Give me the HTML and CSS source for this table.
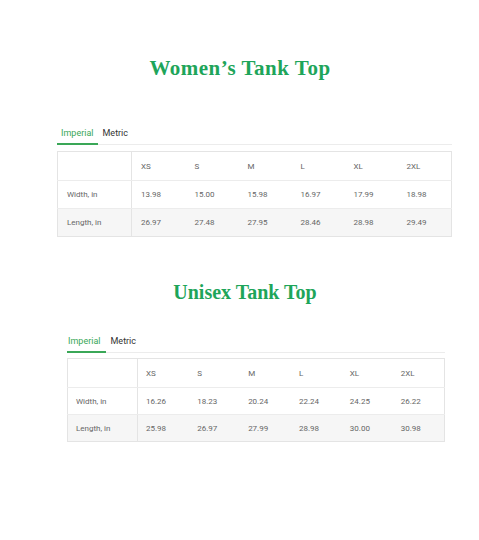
FILE: index.html
```html
<!DOCTYPE html>
<html>
<head>
<meta charset="utf-8">
<link rel="stylesheet" href="styles.css">
</head>
<body>
<div class="page">
  <section class="chart chart-one">
    <h2 class="title">Women’s Tank Top</h2>
    <div class="tabs">
      <span class="tab active">Imperial</span>
      <span class="tab">Metric</span>
    </div>
    <table class="sizes">
      <tr class="head"><td class="label"></td><td>XS</td><td>S</td><td>M</td><td>L</td><td>XL</td><td>2XL</td></tr>
      <tr><td class="label">Width, in</td><td>13.98</td><td>15.00</td><td>15.98</td><td>16.97</td><td>17.99</td><td>18.98</td></tr>
      <tr class="shade"><td class="label">Length, in</td><td>26.97</td><td>27.48</td><td>27.95</td><td>28.46</td><td>28.98</td><td>29.49</td></tr>
    </table>
  </section>
  <section class="chart chart-two">
    <h2 class="title">Unisex Tank Top</h2>
    <div class="tabs">
      <span class="tab active">Imperial</span>
      <span class="tab">Metric</span>
    </div>
    <table class="sizes">
      <tr class="head"><td class="label"></td><td>XS</td><td>S</td><td>M</td><td>L</td><td>XL</td><td>2XL</td></tr>
      <tr><td class="label">Width, in</td><td>16.26</td><td>18.23</td><td>20.24</td><td>22.24</td><td>24.25</td><td>26.22</td></tr>
      <tr class="shade"><td class="label">Length, in</td><td>25.98</td><td>26.97</td><td>27.99</td><td>28.98</td><td>30.00</td><td>30.98</td></tr>
    </table>
  </section>
</div>
</body>
</html>
```
FILE: styles.css
```css
html, body {
  margin: 0;
  padding: 0;
  background: #ffffff;
}
body {
  width: 479px;
  height: 540px;
  overflow: hidden;
  font-family: Roboto, "Liberation Sans", sans-serif;
}
.page {
  display: flex;
  flex-direction: column;
}
.chart {
  display: flex;
  flex-direction: column;
}
.chart-one {
  margin-left: 57px;
  width: 395px;
  padding-top: 55px;
}
.chart-two {
  margin-left: 67px;
  width: 378px;
  padding-top: 42px;
}
.title {
  margin: 0;
  font-family: "Liberation Serif", "Times New Roman", serif;
  font-weight: bold;
  line-height: 26px;
  color: #1ea55a;
  text-align: center;
}
.chart-one .title { font-size: 21px; letter-spacing: 0.5px; margin-right: 29px; margin-bottom: 46px; }
.chart-two .title { font-size: 20px; margin-right: 22px; margin-bottom: 30px; }
.tabs {
  display: flex;
  border-bottom: 1px solid #ececec;
  font-size: 9px;
  line-height: 12px;
}
.tab {
  padding: 0 4px 5px 4px;
  color: #333333;
}
.tab.active {
  color: #3aa757;
  border-bottom: 2px solid #3aa757;
  margin-bottom: -1px;
  padding-bottom: 4px;
  margin-right: 1px;
}
.chart-two .tab.active { padding-left: 1px; padding-right: 5px; }
.chart-one .tabs { margin-bottom: 6px; }
.chart-two .tabs { margin-bottom: 5px; }
.sizes {
  border-collapse: collapse;
  border: 1px solid #e4e4e4;
  width: 100%;
  font-size: 8px;
  color: #666666;
}
.sizes td {
  padding: 0 0 0 9px;
  height: 27px;
  text-align: left;
  border-bottom: 1px solid #ececec;
}
.sizes .head td { height: 28px; }
.sizes td.label {
  width: 64px;
  border-right: 1px solid #e4e4e4;
}
.chart-two .sizes td.label { width: 61px; }
.chart-two .sizes td { padding-left: 8px; height: 26px; }
.chart-two .sizes .head td { height: 28px; }
.sizes .shade td { background: #f6f6f6; border-bottom: 0; }
```
